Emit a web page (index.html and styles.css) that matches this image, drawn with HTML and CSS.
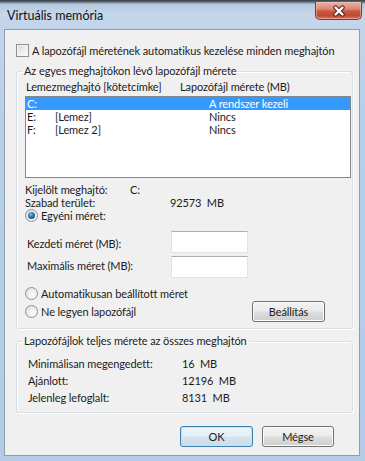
FILE: index.html
```html
<!DOCTYPE html>
<html lang="hu">
<head>
<meta charset="utf-8">
<title>Virtuális memória</title>
<link rel="stylesheet" href="styles.css">
</head>
<body>
<div class="window">
  <div class="titlebar">
    <span class="title">Virtuális memória</span>
    <div class="close-btn">
      <svg width="14" height="12" viewBox="0 0 14 12"><path d="M3.5 2.5 L10.5 9.5 M10.5 2.5 L3.5 9.5" stroke="#5a2018" stroke-width="4.4" stroke-linecap="round"/><path d="M3.5 2.5 L10.5 9.5 M10.5 2.5 L3.5 9.5" stroke="#ffffff" stroke-width="2.4" stroke-linecap="round"/></svg>
    </div>
  </div>
  <div class="client">
    <div class="check-row"><span class="checkbox"></span><span>A lapozófájl méretének automatikus kezelése minden meghajtón</span></div>
    <fieldset class="group group-drives">
      <legend>Az egyes meghajtókon lévő lapozófájl mérete</legend>
      <div class="headers"><span class="head-drive">Lemezmeghajtó [kötetcímke]</span><span>Lapozófájl mérete (MB)</span></div>
      <div class="listbox">
        <div class="lrow selected"><span class="c-drive">C:</span><span class="c-label"></span><span>A rendszer kezeli</span></div>
        <div class="lrow"><span class="c-drive">E:</span><span class="c-label">[Lemez]</span><span>Nincs</span></div>
        <div class="lrow"><span class="c-drive">F:</span><span class="c-label">[Lemez 2]</span><span>Nincs</span></div>
      </div>
      <div class="info-row info-first"><span class="info-label">Kijelölt meghajtó:</span><span>C:</span></div>
      <div class="info-row"><span class="info-label">Szabad terület:</span><span class="free">92573  MB</span></div>
      <div class="radio-row radio-custom"><span class="radio checked"></span><span>Egyéni méret:</span></div>
      <div class="field-row field-initial"><span class="field-label">Kezdeti méret (MB):</span><span class="textbox"></span></div>
      <div class="field-row field-max"><span class="field-label">Maximális méret (MB):</span><span class="textbox"></span></div>
      <div class="radio-row radio-auto"><span class="radio"></span><span>Automatikusan beállított méret</span></div>
      <div class="radio-row radio-none"><span class="radio"></span><span>Ne legyen lapozófájl</span><button class="btn btn-set">Beállítás</button></div>
    </fieldset>
    <fieldset class="group group-total">
      <legend>Lapozófájlok teljes mérete az összes meghajtón</legend>
      <div class="total-row total-first"><span class="total-label">Minimálisan megengedett:</span><span class="val">16  MB</span></div>
      <div class="total-row"><span class="total-label">Ajánlott:</span><span class="val">12196  MB</span></div>
      <div class="total-row"><span class="total-label">Jelenleg lefoglalt:</span><span class="val">8131  MB</span></div>
    </fieldset>
    <div class="dialog-buttons">
      <button class="btn btn-ok">OK</button>
      <button class="btn btn-cancel">Mégse</button>
    </div>
  </div>
</div>
</body>
</html>
```

FILE: styles.css
```css
html, body {
  margin: 0;
  padding: 0;
}
body {
  width: 365px;
  height: 461px;
  overflow: hidden;
  font-family: Lato, "Open Sans", sans-serif;
  font-size: 11px;
  letter-spacing: -0.1px;
  color: #1b1b1b;
}
.window {
  width: 365px;
  height: 461px;
  box-sizing: border-box;
  padding: 0 5px 5px 4px;
  display: flex;
  flex-direction: column;
  background: linear-gradient(to bottom, #353b42 0px, #5d6b7b 2px, #b3c7de 4px, #c6d7ea 14px, #c1d4e9 29px, #b9cfe8 120px, #b3cbe7 100%);
}
.titlebar {
  height: 29px;
  box-sizing: border-box;
  margin: 0 -5px 0 -4px;
  padding: 2px 3px 0 7px;
  display: flex;
  align-items: flex-start;
  justify-content: space-between;
}
.title {
  margin-top: 7px;
  line-height: 14px;
  font-size: 12.5px;
  letter-spacing: 0;
  color: #111;
}
.close-btn {
  width: 47px;
  height: 18px;
  box-sizing: border-box;
  border: 1px solid #7a3a30;
  border-top: none;
  border-radius: 0 0 5px 5px;
  background: linear-gradient(to bottom, #e9b1a4 0%, #db8a78 40%, #c9543c 55%, #c24a32 80%, #d8765e 100%);
  box-shadow: inset 0 0 0 1px rgba(255,210,200,0.45);
  display: flex;
  align-items: center;
  justify-content: center;
}
.client {
  flex: 1;
  background: #f0f0f0;
  border: 1px solid #8d9db0;
  display: flex;
  flex-direction: column;
  min-height: 0;
}
.check-row {
  margin: 14px 0 0 11px;
  height: 13px;
  display: flex;
  align-items: center;
  gap: 3px;
  line-height: 13px;
  white-space: nowrap;
}
.checkbox {
  width: 13px;
  height: 13px;
  box-sizing: border-box;
  border: 1px solid #8e8f8f;
  background: linear-gradient(135deg, #d8d8d8 0%, #eeeeee 55%, #fbfbfb 100%);
  box-shadow: inset 0 0 0 1px #f4f4f4;
  flex: none;
}
.group {
  margin: 0;
  padding: 0 0 6px 0;
  border: 1px solid #d5dfe5;
  border-radius: 3px;
  box-shadow: inset 1px 1px 0 #fff, 1px 1px 0 #fff;
  min-width: 0;
}
.group legend {
  padding: 0 2px;
  margin-left: 5px;
  line-height: 14px;
}
.group-drives {
  margin: 7px 6px 0 11px;
}
.headers {
  margin-top: 2px;
  padding-left: 9px;
  line-height: 14px;
  display: flex;
}
.head-drive {
  width: 154px;
}
.listbox {
  margin: 2px 0 0 8px;
  width: 326px;
  height: 82px;
  box-sizing: border-box;
  border: 1px solid #828790;
  background: #fff;
}
.lrow {
  display: flex;
  height: 13px;
  line-height: 13px;
  padding-left: 1px;
}
.lrow.selected {
  background: #3399ff;
  color: #fff;
}
.c-drive {
  width: 28px;
}
.c-label {
  width: 154px;
}
.info-row {
  display: flex;
  line-height: 12.5px;
  padding-left: 8px;
  white-space: pre;
}
.info-first {
  margin-top: 6px;
}
.info-label {
  width: 105px;
}
.free {
  margin-left: 40px;
}
.radio-row {
  display: flex;
  align-items: center;
  gap: 3px;
  padding-left: 8px;
  height: 13px;
  line-height: 13px;
}
.radio {
  width: 13px;
  height: 13px;
  box-sizing: border-box;
  border-radius: 50%;
  border: 1px solid #8e8f8f;
  background: radial-gradient(circle at 65% 65%, #fbfbfb 0%, #ececec 50%, #d4d4d4 100%);
  flex: none;
  display: flex;
  align-items: center;
  justify-content: center;
}
.radio.checked::after {
  content: "";
  width: 7px;
  height: 7px;
  border-radius: 50%;
  background: radial-gradient(circle at 40% 35%, #8ac4ea 0%, #2b6ea5 45%, #143f66 100%);
}
.radio-custom {
  margin-top: 0;
}
.field-row {
  display: flex;
  align-items: flex-start;
  padding-left: 10px;
}
.field-label {
  width: 144px;
  line-height: 14px;
}
.textbox {
  width: 77px;
  height: 22px;
  box-sizing: border-box;
  background: #fff;
  border: 1px solid #e2e3ea;
  border-top-color: #abadb3;
}
.field-initial {
  margin-top: 9px;
}
.field-initial .field-label {
  margin-top: 6px;
}
.field-max {
  margin-top: 3px;
}
.field-max .field-label {
  margin-top: 3px;
}
.radio-auto {
  margin-top: 9px;
}
.radio-none {
  margin-top: 1px;
  height: 21px;
}
.btn {
  height: 21px;
  box-sizing: border-box;
  border: 1px solid #707070;
  border-radius: 3px;
  background: linear-gradient(to bottom, #f2f2f2 0%, #ebebeb 48%, #dddddd 52%, #cfcfcf 100%);
  box-shadow: inset 0 0 0 1px #fcfcfc;
  font-family: inherit;
  font-size: 11px;
  letter-spacing: -0.1px;
  color: #1b1b1b;
  padding: 0;
  line-height: 18px;
}
.btn-set {
  width: 73px;
  margin-left: auto;
  margin-right: 27px;
}
.group-total {
  margin: 5px 6px 0 11px;
}
.total-row {
  display: flex;
  line-height: 17px;
  padding-left: 11px;
  white-space: pre;
}
.total-first {
  margin-top: 7px;
}
.total-label {
  width: 154px;
}
.dialog-buttons {
  margin-top: 13px;
  display: flex;
  justify-content: flex-end;
  gap: 9px;
  padding-right: 25px;
}
.btn-ok {
  width: 73px;
  border-color: #3c7fb1;
  background: linear-gradient(to bottom, #eef5fa 0%, #e4eef5 48%, #d6e4ee 52%, #ccdce8 100%);
  box-shadow: inset 0 0 0 1px #c4e3f6;
}
.btn-cancel {
  width: 72px;
}
```
